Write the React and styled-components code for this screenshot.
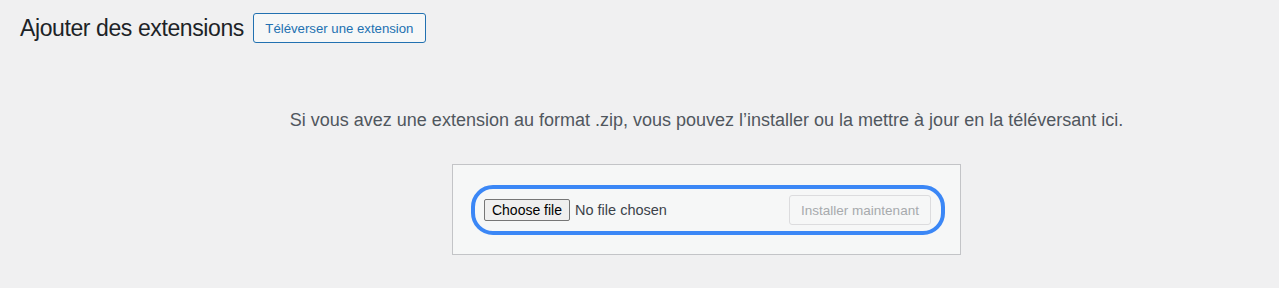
import React from 'react';
import styled, { createGlobalStyle } from 'styled-components';

const GlobalStyle = createGlobalStyle`
  html, body {
    margin: 0;
    padding: 0;
    background: #f0f0f1;
    font-family: "Liberation Sans", Arial, sans-serif;
    color: #3c434a;
  }
`

const Wrap = styled.div`
  padding: 13px 20px 0 20px;
  height: 288px;
  box-sizing: border-box;
`

const Header = styled.div`
  display: flex;
  align-items: center;
  gap: 9px;
`

const Title = styled.h1`
  margin: 0;
  font-size: 23px;
  font-weight: 400;
  line-height: 30px;
  letter-spacing: -0.4px;
  color: #1d2327;
`

const ActionButton = styled.button`
  height: 30px;
  width: 173px;
  padding: 0;
  font-family: inherit;
  font-size: 13.2px;
  color: #2271b1;
  background: #f6f7f7;
  border: 1px solid #2271b1;
  border-radius: 3px;
`

const UploadSection = styled.div`
  margin-top: 64px;
  padding-left: 134px;
  text-align: center;
`

const Help = styled.p`
  margin: 0;
  font-size: 18px;
  line-height: 27px;
  color: #50575e;
`

const Form = styled.div`
  width: 474px;
  margin: 30px auto 0;
  padding: 20px 15px 19px 18px;
  border: 1px solid #c3c4c7;
  background: #f6f7f7;
`

const Ring = styled.div`
  box-sizing: border-box;
  height: 50px;
  border: 4px solid #3b87f6;
  border-radius: 22px;
  display: flex;
  align-items: center;
  padding: 0 10px 0 9px;
`

const FileButton = styled.span`
  box-sizing: border-box;
  height: 22px;
  width: 86px;
  display: inline-flex;
  align-items: center;
  justify-content: center;
  font-size: 14px;
  color: #000;
  background: #efefef;
  border: 1px solid #767676;
  border-radius: 2px;
`

const FileName = styled.span`
  margin-left: 5px;
  font-size: 14.5px;
  color: #3c434a;
  flex: 1;
  text-align: left;
`

const SubmitButton = styled.button`
  box-sizing: border-box;
  height: 30px;
  width: 142px;
  padding: 0;
  font-family: inherit;
  font-size: 13.5px;
  color: #a7aaad;
  background: #f6f7f7;
  border: 1px solid #dcdcde;
  border-radius: 3px;
`

export default function App() {
  return (
    <Wrap>
      <GlobalStyle />
      <Header>
        <Title>Ajouter des extensions</Title>
        <ActionButton>Téléverser une extension</ActionButton>
      </Header>
      <UploadSection>
        <Help>Si vous avez une extension au format .zip, vous pouvez l’installer ou la mettre à jour en la téléversant ici.</Help>
        <Form>
          <Ring>
            <FileButton>Choose file</FileButton>
            <FileName>No file chosen</FileName>
            <SubmitButton disabled>Installer maintenant</SubmitButton>
          </Ring>
        </Form>
      </UploadSection>
    </Wrap>
  );
}
